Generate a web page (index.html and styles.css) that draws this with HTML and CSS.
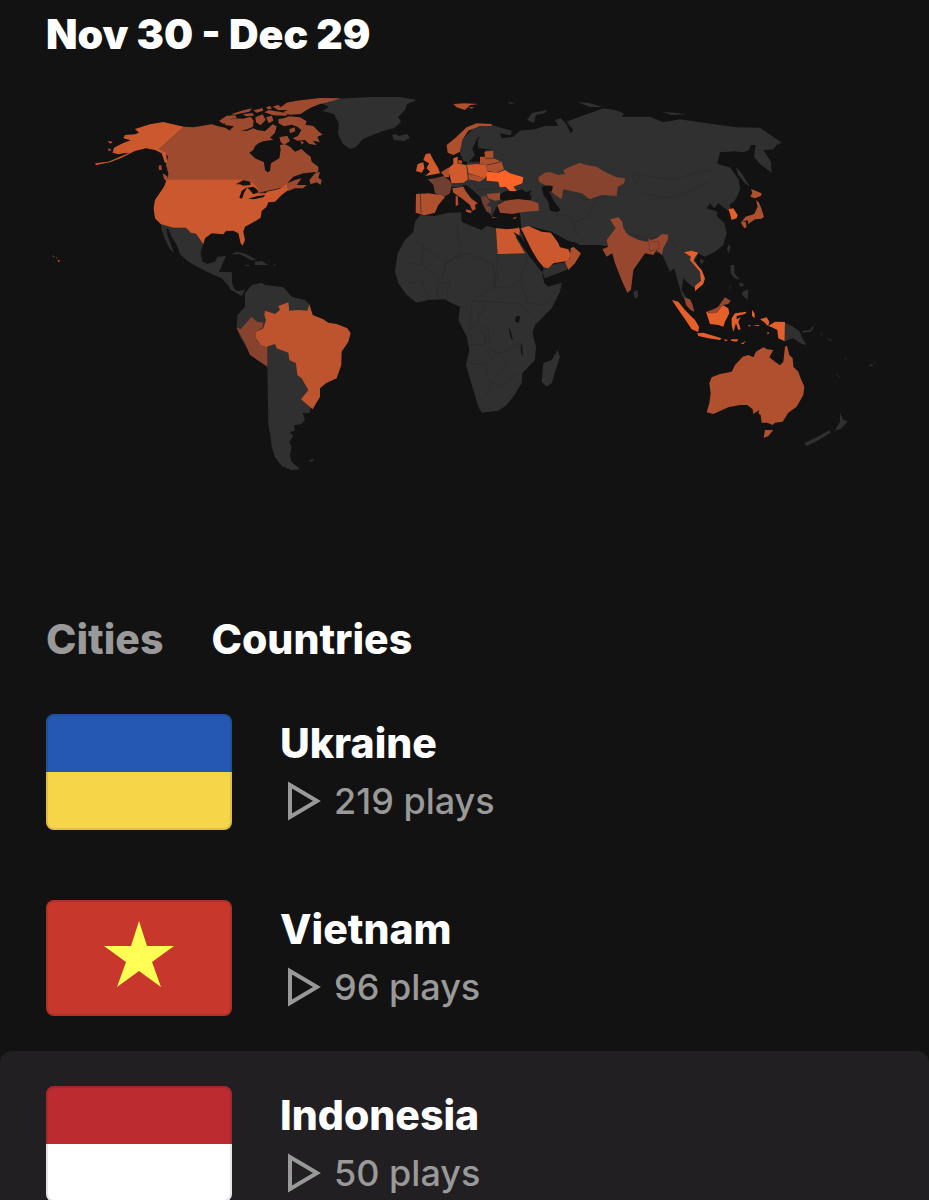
FILE: index.html
```html
<!DOCTYPE html>
<html lang="en">
<head>
    <meta charset="UTF-8">
    <meta name="viewport" content="width=device-width, initial-scale=1">
    <title>Top locations</title>
    <link rel="stylesheet" href="styles.css">
</head>
<body>
    <main class="page">
        <h1 class="period">Nov 30 - Dec 29</h1>

        <svg class="map" viewBox="0 85 929 395" role="img" aria-label="Plays by country">
            <!-- Greenland, Iceland, arctic islands -->
            <g class="land">
                <path d="M321 103 334 99 352 98 372 97 400 97 417 100 407 104 405 110 398 117 401 122 394 128 383 131 373 135 363 139 356 147 350 149 343 144 338 134 339 124 334 114 322 111 329 107Z"/>
                <path d="M392 135 395 134 399 136 407 134 410 138 404 141 394 140Z"/>
                <path d="M527 120 532 113 547 110 545 113 536 115 534 123Z"/>
                <path d="M508 102 516 103 510 104ZM577 102 589 103 603 107 590 107ZM663 112 677 113 688 114 672 115Z"/>
            </g>

            <!-- North America -->
            <g transform="translate(40 85) scale(.3333)">
                <path class="land" d="M362 415 400 428 438 428 452 443 468 446 490 478 481 505 488 530 502 537 525 530 533 515 558 513 545 543 537 560 575 562 576 590 582 615 600 618 615 612 607 630 590 625 568 605 545 580 510 565 480 550 445 530 420 508 410 480 395 455 385 432 378 430 384 455 392 478 402 505 390 492 375 462 366 438Z"/>
                <path class="land" d="M572 508 592 500 620 508 650 525 635 526 600 508ZM645 530 665 528 685 540 665 540 645 540ZM615 538 630 542 618 544ZM700 538 712 540 700 542Z"/>
                <path class="canada" d="M432 125 460 127 515 118 535 124 555 128 568 136 595 134 620 138 640 130 652 135 675 139 690 125 698 118 710 124 705 143 690 158 700 165 672 168 655 175 645 184 640 195 628 203 645 220 672 232 675 255 682 262 690 258 693 235 718 220 722 195 720 180 735 178 750 185 765 200 785 192 798 205 812 215 815 230 835 245 835 260 790 265 760 275 742 295 765 285 785 280 770 300 800 300 790 310 765 310 745 318 740 300 720 310 680 318 650 325 655 310 640 295 595 287 383 287 385 265 378 240 384 215 375 203 358 192Z"/>
                <path class="canada" d="M808 285 828 262 840 262 835 278 845 285 842 300 830 292 812 298ZM368 265 380 272 392 290 385 295 372 282ZM356 242 364 240 366 255 357 255Z"/>
                <path class="usa" d="M165 235 205 230 240 215 268 203 250 205 235 208 218 203 222 188 248 175 272 166 250 160 255 150 285 148 297 143 285 132 330 118 370 111 395 117 432 125 358 192 378 203 382 235 374 232 365 205 345 195 318 190 285 198 245 218 210 232 168 240ZM202 168 218 170 212 176ZM205 190 215 195 206 198Z"/>
                <path class="usa" d="M380 284H595L640 294 655 310 650 325 680 320 718 312 740 298 745 315 725 330 705 350 685 352 680 365 665 378 662 398 640 412 615 425 610 440 615 465 608 482 602 475 595 445 580 437 558 438 550 448 515 445 495 460 490 478 468 446 452 443 438 428 400 428 362 417 345 400 341 370 345 345 372 305Z"/>
                <path class="usa" d="M38 511 44 515 39 515ZM48 516 54 521 49 520ZM53 524 61 527 55 532Z"/>
                <path class="sea" d="M587 298 610 286 630 290 632 300 610 302 600 298ZM598 338 605 318 622 306 612 325 606 341ZM622 308 640 305 650 312 655 322 640 328 632 318ZM625 341 650 334 675 330 672 336 640 343ZM655 325 680 320 678 325Z"/>
            </g>

            <!-- Canadian arctic -->
            <g class="canada" transform="translate(210 90) scale(.3333)">
                <path d="M27 93 40 84 50 77 76 76 80 83 63 88 58 97 40 101Z"/>
                <path d="M47 94 75 85 100 86 122 80 131 92 129 110 112 118 85 123 60 119 72 109 45 105Z"/>
                <path d="M62 73 100 61 126 55 118 65 95 70 75 74ZM98 73 128 69 132 77 108 79Z"/>
                <path d="M130 61 157 54 160 62 140 68ZM136 82 158 73 167 90 152 106 138 97Z"/>
                <path d="M168 82 186 77 190 92 176 100ZM163 67 176 60 212 66 234 71 228 77 190 76Z"/>
                <path d="M168 52 180 48 186 56 174 58ZM188 50 205 44 212 52 230 38 260 32 330 24 392 25 370 32 330 42 305 52 290 60 272 72 240 74 218 67 234 60 205 61Z"/>
                <path d="M205 88 225 84 235 79 270 82 290 94 286 104 310 108 325 124 338 134 322 140 329 156 308 152 320 165 298 162 285 150 262 152 248 145 264 138 274 120 262 110 245 104 222 109 206 100Z"/>
                <path d="M208 142 232 137 240 153 222 165 212 156Z"/>
                <path d="M238 118 254 112 256 124 240 130ZM270 152 282 157 276 164Z"/>
            </g>

            <!-- South America -->
            <g transform="translate(220 270) scale(.3333)">
                <path class="land" d="M0 8 35 8 36 45 50 65 70 65 65 78 50 68 32 60 18 30ZM50 170 52 135 75 110 75 70 95 45 125 38 135 45 190 52 215 80 255 90 270 105 262 135 300 250 265 360 245 388 275 405 268 430 248 428 255 450 245 462 222 466 225 482 208 487 220 498 208 515 215 532 210 555 215 575 240 597 215 601 185 588 165 562 155 530 152 500 145 465 142 290 90 250 60 200Z"/>
                <path class="land" d="M262 570 285 568 275 575Z"/>
                <path class="peru" d="M48 172 62 178 95 140 110 155 130 158 128 172 108 185 110 210 122 225 142 228 142 290 90 255 75 220Z"/>
                <path class="brazil" d="M135 122 165 132 180 120 175 108 205 97 208 122 235 120 262 122 268 103 278 135 310 148 325 158 350 162 382 175 392 190 385 215 365 245 364 285 350 325 318 340 300 355 300 380 278 418 243 388 265 360 245 325 232 315 228 280 208 270 205 248 170 235 165 222 140 230 122 225 108 205 108 185 130 175 138 150 133 135Z"/>
            </g>

            <!-- Africa -->
            <g transform="translate(385 200) scale(.3333)">
                <path class="land" d="M105 45 150 48 190 38 228 37 230 65 265 80 290 90 305 78 333 85 400 88 410 100 430 165 470 215 478 250 490 260 530 248 525 275 500 325 450 375 442 400 453 440 450 480 412 520 410 550 388 585 365 615 340 632 290 638 280 620 262 560 243 495 253 450 245 410 220 360 225 320 200 310 180 298 130 300 95 308 65 285 40 250 30 215 38 160 60 120 85 95 90 65Z"/>
                <path class="land" d="M518 450 525 470 500 550 485 560 470 545 475 490 500 480Z"/>
                <path class="egypt" d="M333 85 365 88 400 84 402 100 392 112 420 160 338 162Z"/>
                <path class="border" d="M215 80 228 160 185 190 90 120M60 185 110 195 115 125M110 195 170 240 185 185 250 160 325 195 328 260 262 300 255 370 300 400 300 435 250 435M338 162 330 260 370 265 405 240 430 165M405 240 430 310 480 315 520 265M260 300 300 305 400 310 445 350M300 310 275 370 310 390 315 450 350 460 400 430M250 490 300 495 310 540 350 560 400 520M70 250 110 240 130 300M155 300 160 250 190 250 185 300M300 495 340 455 365 490 325 540 300 590"/>
                <path class="sea" d="M392 350 406 347 402 368 390 365ZM370 382 376 390 384 420 378 416ZM407 428 412 440 413 470 408 460Z"/>
            </g>

            <!-- Europe and Asia, one tile: x grows to 1190 -->
            <g transform="translate(385 90) scale(.3333)">
                <path class="land" d="M320 105 380 122 378 136 345 130 350 145 385 140 405 122 450 118 480 108 520 108 510 90 528 85 545 105 557 130 565 120 545 95 580 82 655 55 690 60 717 70 710 80 795 80 835 97 885 88 955 98 1055 112 1125 113 1190 158 1175 165 1165 178 1135 180 1158 215 1160 248 1125 222 1107 200 1112 165 1098 165 1092 180 1075 187 1050 184 1005 187 997 222 1035 232 1062 270 1065 300 1050 332 1033 345 1040 360 1030 362 1000 340 988 355 975 340 965 355 998 365 995 378 1018 400 1025 430 1015 465 990 485 960 500 940 490 930 510 957 560 935 600 905 575 895 565 890 600 915 640 922 658 905 640 890 615 875 560 868 535 855 545 830 490 640 465 585 465 545 450 500 425 440 410 410 425 405 370 440 300 340 340 320 380 300 350 285 320 245 285 195 285 200 270 250 215 300 215 300 180 325 180 300 176 280 175 278 150 290 135 275 148 262 178 270 195 250 217 235 212 225 190 230 150 270 110Z"/>
                <path class="land" d="M470 533 520 520 560 515 545 540 480 565 472 550ZM195 280 230 278 235 290 200 292ZM1052 230 1070 250 1095 290 1080 280 1060 255ZM745 605 757 600 760 620 750 627ZM1030 463 1036 470 1032 490 1026 480ZM1037 525 1048 525 1048 550 1065 570 1050 565 1037 550ZM1072 605 1090 598 1088 630 1072 615ZM1060 578 1080 582 1068 592ZM945 508 958 510 952 522 945 518ZM1025 603 1037 588 1038 590Z"/>
                <path class="border" d="M740 250 800 262 870 268 940 245 990 240M740 260 780 310 840 325 900 310 970 275M630 330 610 380 560 400M560 310 600 330 640 320M740 430 790 445 850 440 880 480M500 370 560 380 580 440M1000 340 1030 330M600 330 670 320 690 300"/>

                <path class="sea" d="M350 310 365 302 385 305 410 298 440 318 438 330 400 328 380 325 355 332 340 325ZM470 290 500 286 505 302 492 305 505 330 515 345 527 360 515 367 495 362 490 335 475 315Z"/>
                <path class="norway" d="M185 165 210 145 245 112 275 100 320 102 320 108 285 108 250 122 232 150 225 185 205 195 188 188ZM205 42 240 40 280 42 255 46 240 60 215 52ZM250 52 268 52 260 56Z"/>
                <path class="poland" d="M98 222 115 217 118 235 110 248 93 243ZM122 192 135 190 145 210 160 235 165 250 120 258 135 245 125 235 132 220 115 210Z"/>
                <path class="poland" d="M195 230 205 222 205 205 218 200 218 220 245 226 250 268 235 278 200 280 192 250 178 260ZM245 225 275 222 305 225 308 252 300 265 250 250Z"/>
                <path class="norway" d="M220 210 232 212 230 222 220 218ZM250 252 300 264 285 275 250 268ZM168 247 192 232 192 262 180 262Z"/>
                <path class="baltic" d="M285 200 300 200 298 185 325 182 325 205 350 215 357 238 335 248 305 242 300 225 285 222Z"/>
                <path class="ukraine" d="M305 245 340 248 360 240 375 250 415 262 412 280 385 290 395 303 375 303 362 290 345 292 340 275 305 272Z"/>
                <path class="france" d="M128 268 150 265 175 258 195 272 200 285 195 310 178 320 150 310 145 285Z"/>
                <path class="italy" d="M93 312 130 310 168 315 180 322 160 345 150 368 118 376 92 368ZM202 295 235 290 242 303 258 325 278 340 270 345 272 358 262 362 255 345 230 325 205 308ZM242 358 260 362 258 370 243 365ZM212 318 218 318 220 345 212 348Z"/>
                <path class="turkey" d="M305 312 345 308 345 330 330 332 310 325ZM337 345 360 332 400 327 440 332 460 340 462 362 420 365 380 372 345 368Z"/>
                <path class="greece" d="M288 320 303 318 315 335 305 345 318 352 318 370 305 365 292 340ZM320 380 340 382 322 385Z"/>
                <path class="border" d="M106 312 108 370M275 300 340 295M270 280 290 310M325 205 300 205M245 225 250 268M305 225 350 215"/>
                <path class="turkey" d="M382 384 396 380 390 388Z"/>

                <path class="saudi" d="M408 415 430 408 470 425 500 428 518 455 525 472 550 478 558 495 550 512 505 520 490 535 470 530 440 480ZM400 410 405 420 402 440 395 430Z"/>
                <path class="oman" d="M557 475 565 470 588 490 570 520 550 540 540 515 555 505Z"/>
                <path class="sea" d="M495 425 512 432 525 455 550 460 567 455 580 462 565 470 555 475 530 470 518 455ZM385 425 408 440 435 485 475 530 475 545 460 530 420 480Z"/>
                <path class="kazakh" d="M460 262 480 248 495 246 520 255 540 252 535 240 555 230 585 218 600 224 635 230 650 240 665 248 695 262 720 265 718 280 698 290 695 318 650 315 615 328 590 310 535 298 530 328 515 318 500 305 505 288 480 285 462 275Z"/>
                <path class="india" d="M675 388 700 382 712 395 715 415 730 435 760 450 785 455 815 445 832 432 850 434 848 450 835 475 830 495 815 480 805 495 780 490 745 540 738 600 727 608 712 575 690 520 682 490 665 500 652 478 670 470 665 450 692 415Z"/>
                <path class="bordered" d="M790 445 802 455 820 455 825 475 808 480 795 485Z"/>
                <path class="border" d="M720 425 785 452"/>
                <path class="vietnam" d="M897 487 920 482 940 488 930 502 925 512 950 540 960 565 955 582 930 604 930 588 948 572 945 545 915 510 918 500Z"/>
                <path class="vietnam" d="M1031 358 1045 355 1058 375 1055 385 1040 390Z"/>
                <path class="japan" d="M1098 297 1112 302 1130 310 1128 318 1110 325 1096 320 1102 308ZM1113 330 1122 338 1129 355 1137 380 1130 386 1110 388 1100 395 1090 390 1070 395 1082 380 1108 372 1118 350ZM1068 395 1082 395 1085 410 1078 415 1070 402ZM1088 390 1103 392 1090 402Z"/>
            </g>

            <!-- South-east Asia and Oceania -->
            <g transform="translate(660 230) scale(.3333)">
                <path class="land" d="M375 278 400 290 420 305 425 320 440 345 425 342 400 325 375 334ZM425 303 450 300 458 288 462 292 452 305 430 308ZM465 285 462 280 466 284ZM475 305 488 316 484 316ZM495 322 520 332 510 332ZM525 428 543 445 536 442ZM625 405 640 402 635 410ZM640 398 650 395 645 400ZM555 380 560 395 556 390ZM540 548 550 570 563 574 545 595 525 602 540 575ZM432 640 470 622 510 600 512 608 470 634 440 648Z"/>
                <path class="indonesia" d="M36 210 55 215 75 240 105 270 117 290 115 306 95 298 75 268 50 232ZM112 310 130 308 185 325 180 330 145 325 115 318ZM138 245 155 250 170 248 188 225 205 235 208 250 195 275 190 290 175 285 150 282ZM215 265 225 250 260 245 255 252 230 258 230 268 242 262 235 275 242 298 235 300 228 280 220 305 215 285ZM276 240 284 250 284 265 276 258ZM300 268 320 262 328 275 325 288 345 275 375 276 374 334 355 325 352 300 335 292 320 285 315 278ZM193 328 205 330 195 334ZM212 328 235 328 230 335 215 333ZM242 342 258 332 250 342ZM263 286 272 286 270 290ZM278 285 298 285 296 289ZM322 306 328 308 323 314Z"/>
                <path class="malaysia" d="M73 203 90 208 98 225 103 245 92 240 78 225ZM140 245 160 238 175 230 185 215 195 202 212 212 205 222 188 225 170 248 155 250Z"/>
                <path class="australia" d="M310 352 322 358 340 360 328 382 345 395 360 406 370 395 375 350 381 347 388 375 398 385 400 410 415 425 422 445 433 470 430 495 410 530 385 548 368 575 345 578 338 585 322 578 305 578 302 555 295 550 298 540 280 552 278 538 262 525 240 525 205 532 160 552 140 547 148 520 152 490 148 460 155 442 180 432 215 425 225 405 248 380 265 375 280 382 288 365ZM315 600 340 600 325 618 311 624Z"/>
            </g>
        </svg>

        <div class="tabs" role="tablist">
            <button class="tab" type="button" role="tab" aria-selected="false">Cities</button>
            <button class="tab tab-active" type="button" role="tab" aria-selected="true">Countries</button>
        </div>

        <ul class="countries">
            <li class="country">
                <div class="flag flag-ukraine"></div>
                <div class="info">
                    <h2 class="name">Ukraine</h2>
                    <p class="plays">
                        <svg class="play-icon" viewBox="0 0 34 40"><path d="M3 4V36L30 20Z"/></svg>
                        219 plays
                    </p>
                </div>
            </li>
            <li class="country">
                <div class="flag flag-vietnam">
                    <svg class="star" viewBox="0 0 70 74"><path d="M35 0 43 25H70L48 41 57 66 35 50 13 66 22 41 0 25H27Z"/></svg>
                </div>
                <div class="info">
                    <h2 class="name">Vietnam</h2>
                    <p class="plays">
                        <svg class="play-icon" viewBox="0 0 34 40"><path d="M3 4V36L30 20Z"/></svg>
                        96 plays
                    </p>
                </div>
            </li>
            <li class="country country-selected">
                <div class="flag flag-indonesia"></div>
                <div class="info">
                    <h2 class="name">Indonesia</h2>
                    <p class="plays">
                        <svg class="play-icon" viewBox="0 0 34 40"><path d="M3 4V36L30 20Z"/></svg>
                        50 plays
                    </p>
                </div>
            </li>
        </ul>
    </main>
</body>
</html>
```

FILE: styles.css
```css
body {
    margin: 0;
    background-color: #121212;
    color: #fff;
    font-family: Inter, "Liberation Sans", sans-serif;
}

.page {
    height: 100vh;
    overflow: hidden;
}

.period {
    margin: 0;
    padding: 10px 46px 27px;
    font-size: 41px;
    line-height: 48px;
    font-weight: 900;
}

/* map */
.map {
    display: block;
    width: 100%;
}

.land {
    fill: #303030;
}

.sea {
    fill: #121212;
}

.border {
    fill: none;
    stroke: #292929;
    stroke-width: 2;
}

.bordered {
    fill: #98472f;
    stroke: #67372a;
    stroke-width: 2;
}

.usa,
.egypt,
.saudi {
    fill: #cc592d;
}

.canada {
    fill: #9e4a2e;
}

.peru,
.kazakh {
    fill: #88432f;
}

.brazil {
    fill: #bd542e;
}

.norway,
.baltic,
.oman,
.japan {
    fill: #ae4f2e;
}

.poland {
    fill: #d05a2c;
}

.ukraine {
    fill: #ff6426;
}

.france,
.greece {
    fill: #6f3f32;
}

.italy,
.australia {
    fill: #b1502f;
}

.turkey,
.india,
.malaysia {
    fill: #98472f;
}

.vietnam,
.indonesia {
    fill: #e55f2a;
}

/* tabs */
.tabs {
    display: flex;
    gap: 48px;
    padding: 135px 46px 16px;
}

.tab {
    padding: 0;
    border: none;
    background: none;
    color: #999;
    font-family: inherit;
    font-size: 41px;
    line-height: 48px;
    font-weight: 800;
    cursor: pointer;
}

.tab-active {
    color: #fff;
}

/* country list */
.countries {
    margin: 0;
    padding: 0;
    list-style: none;
}

.country {
    display: flex;
    gap: 48px;
    padding: 35px 46px;
}

.country-selected {
    background-color: #211f22;
    border-radius: 12px;
}

.flag {
    display: flex;
    align-items: center;
    justify-content: center;
    width: 186px;
    height: 116px;
    border-radius: 8px;
    box-shadow: inset 0 0 0 2px rgba(0, 0, 0, 0.1);
}

.flag-ukraine {
    background: linear-gradient(#2458b3 50%, #f6d648 50%);
}

.flag-vietnam {
    background-color: #c7372b;
}

.flag-indonesia {
    background: linear-gradient(#bb2b30 50%, #fff 50%);
}

.star {
    width: 70px;
    height: 74px;
    fill: #ffff54;
}

.info {
    padding-top: 5px;
}

.name {
    margin: 0;
    font-size: 41px;
    line-height: 48px;
    font-weight: 800;
}

.plays {
    display: flex;
    align-items: center;
    gap: 13px;
    margin: 10px 0 0 7px;
    color: #999;
    font-size: 36px;
    line-height: 48px;
    font-weight: 500;
}

.play-icon {
    width: 34px;
    height: 40px;
    fill: none;
    stroke: #999;
    stroke-width: 4;
}
```
